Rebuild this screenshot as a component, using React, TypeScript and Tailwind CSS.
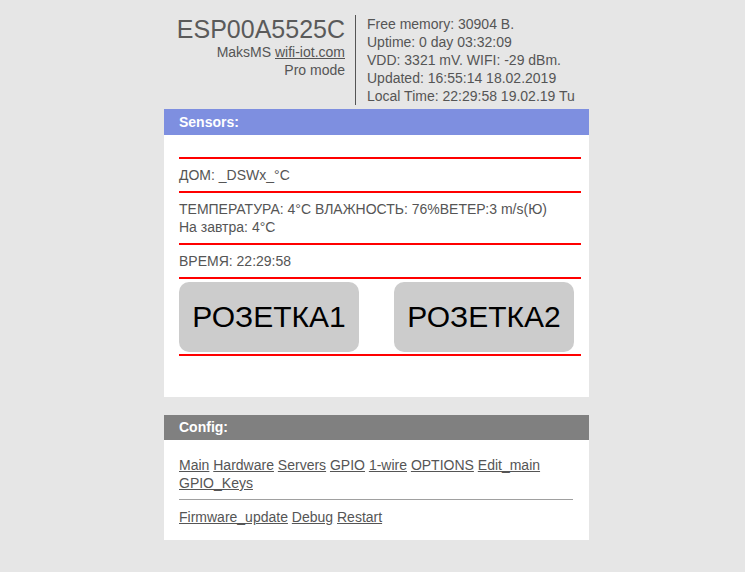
import React from "react";

const RedLine = () => <div className="h-[2px] bg-[#ff0000]" />;

export default function App() {
  const links1 = ["Main", "Hardware", "Servers", "GPIO", "1-wire", "OPTIONS", "Edit_main", "GPIO_Keys"];
  const links2 = ["Firmware_update", "Debug", "Restart"];
  return (
    <div
      className="min-h-[572px] w-full bg-[#e6e6e6] text-[#555555] text-[14px] leading-[18px]"
      style={{ fontFamily: '"Liberation Sans", Arial, Helvetica, sans-serif' }}
    >
      {/* header */}
      <div className="ml-[164px] w-[425px] pt-[15px] pb-[4px] flex">
        <div className="w-[191px] pr-[10px] text-right">
          <div className="text-[25px] leading-[28px] text-[#5a5a5a]">ESP00A5525C</div>
          <div>
            MaksMS <span className="underline">wifi-iot.com</span>
          </div>
          <div>Pro mode</div>
        </div>
        <div className="border-l border-[#555555] pl-[11px]">
          <div>Free memory: 30904 B.</div>
          <div>Uptime: 0 day 03:32:09</div>
          <div>VDD: 3321 mV. WIFI: -29 dBm.</div>
          <div>Updated: 16:55:14 18.02.2019</div>
          <div>Local Time: 22:29:58 19.02.19 Tu</div>
        </div>
      </div>

      {/* sensors */}
      <div className="ml-[164px] w-[425px]">
        <div className="h-[26px] bg-[#7e8fe0] pl-[15px] text-white font-bold leading-[26px]">Sensors:</div>
        <div className="bg-white pl-[15px] pr-[8px] pt-[22px] pb-[41px]">
          <RedLine />
          <div className="py-[7px]">ДОМ: _DSWx_°C</div>
          <RedLine />
          <div className="py-[7px]">
            <div>ТЕМПЕРАТУРА: 4°C ВЛАЖНОСТЬ: 76%ВЕТЕР:3 m/s(Ю)</div>
            <div>На завтра: 4°C</div>
          </div>
          <RedLine />
          <div className="py-[7px]">ВРЕМЯ: 22:29:58</div>
          <RedLine />
          <div className="pt-[3px] pb-[2px] flex gap-[35px]">
            <div className="w-[180px] h-[70px] rounded-[10px] bg-[#cccccc] flex items-center justify-center text-black text-[30px] leading-none">
              РОЗЕТКА1
            </div>
            <div className="w-[180px] h-[70px] rounded-[10px] bg-[#cccccc] flex items-center justify-center text-black text-[30px] leading-none">
              РОЗЕТКА2
            </div>
          </div>
          <RedLine />
        </div>
      </div>

      {/* config */}
      <div className="ml-[164px] w-[425px] mt-[18px]">
        <div className="h-[25px] bg-[#808080] pl-[15px] text-white font-bold leading-[25px]">Config:</div>
        <div className="bg-white pl-[15px] pr-[16px] pt-[16px] pb-[14px]">
          <div>
            {links1.map((l, i) => (
              <React.Fragment key={l}>
                <span className="underline">{l}</span>
                {i < links1.length - 1 ? " " : ""}
              </React.Fragment>
            ))}
          </div>
          <div className="mt-[7px] border-t border-[#a0a0a0]" />
          <div className="mt-[8px]">
            {links2.map((l, i) => (
              <React.Fragment key={l}>
                <span className="underline">{l}</span>
                {i < links2.length - 1 ? " " : ""}
              </React.Fragment>
            ))}
          </div>
        </div>
      </div>
    </div>
  );
}
